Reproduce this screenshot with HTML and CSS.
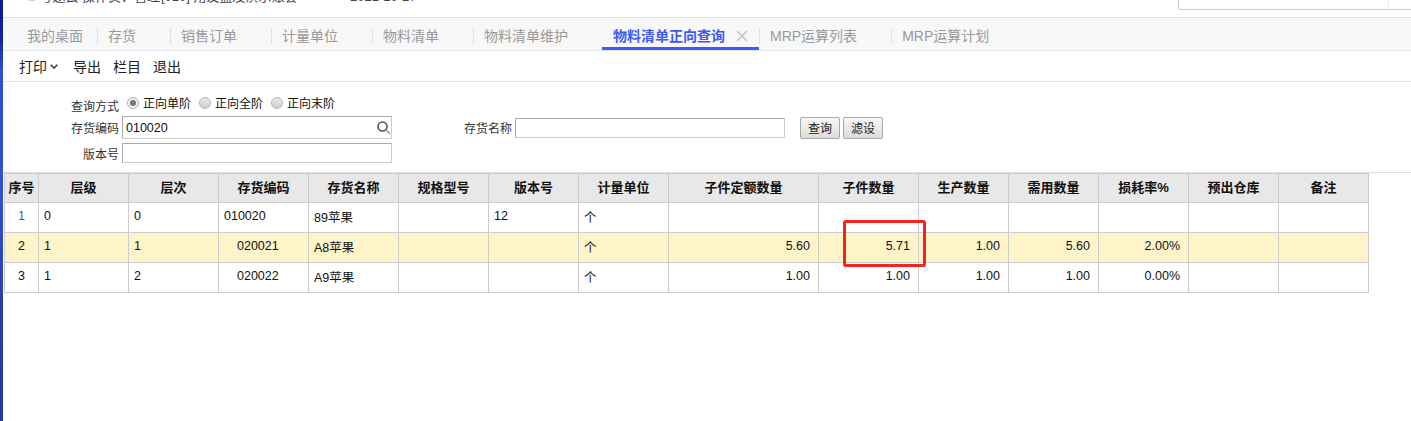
FILE: index.html
```html
<!DOCTYPE html>
<html lang="zh-CN">
<head>
<meta charset="utf-8">
<title>物料清单正向查询</title>
<link rel="stylesheet" href="styles.css">
</head>
<body>
<div class="app">
  <div class="strip"></div>
  <main class="main">
    <header class="top">
      <div class="top-info">
        <span class="top-user">■ 考题云 操作员：管理员</span>
        <span class="top-acct">[010] 用友蓝凌演示账套</span>
        <span class="top-date">2021-10-27</span>
      </div>
      <div class="top-search"><span class="top-search-btn"></span></div>
    </header>
    <nav class="tabs">
      <a class="tab tab-first">我的桌面</a>
      <a class="tab">存货</a>
      <a class="tab">销售订单</a>
      <a class="tab">计量单位</a>
      <a class="tab">物料清单</a>
      <a class="tab">物料清单维护</a>
      <a class="tab tab-active">物料清单正向查询
        <svg class="tab-close" width="12" height="12" viewBox="0 0 12 12"><path d="M1 1l10 10M11 1L1 11" stroke="#c4c4c4" stroke-width="1.6" fill="none"/></svg>
      </a>
      <a class="tab">MRP运算列表</a>
      <a class="tab tab-last">MRP运算计划</a>
    </nav>
    <div class="toolbar">
      <span class="tool tool-print">打印<svg class="chev" width="8" height="5" viewBox="0 0 8 5"><path d="M.7.7L4 4l3.3-3.3" stroke="#333" stroke-width="1.5" fill="none"/></svg></span>
      <span class="tool">导出</span>
      <span class="tool">栏目</span>
      <span class="tool">退出</span>
    </div>
    <form class="form">
      <div class="row row-mode">
        <span class="label label-mode">查询方式</span>
        <span class="radios">
          <span class="radio radio-on"></span><span class="radio-text">正向单阶</span>
          <span class="radio"></span><span class="radio-text">正向全阶</span>
          <span class="radio"></span><span class="radio-text">正向末阶</span>
        </span>
      </div>
      <div class="row row-code">
        <span class="label">存货编码</span>
        <span class="field field-code">010020
          <svg class="search" width="16" height="16" viewBox="0 0 16 16"><circle cx="6.5" cy="6.5" r="4.5" stroke="#555" stroke-width="1.6" fill="none"/><path d="M10 10l4 4" stroke="#8aa" stroke-width="1.6"/></svg>
        </span>
        <span class="label label-name">存货名称</span>
        <span class="field field-name"></span>
        <button type="button" class="btn">查询</button>
        <button type="button" class="btn">滤设</button>
      </div>
      <div class="row row-ver">
        <span class="label">版本号</span>
        <span class="field field-ver"></span>
      </div>
    </form>
    <section class="grid-wrap">
      <table class="grid">
        <colgroup>
          <col class="c-seq"><col class="c-90"><col class="c-90"><col class="c-90"><col class="c-90"><col class="c-90"><col class="c-90"><col class="c-90"><col class="c-150"><col class="c-100"><col class="c-90"><col class="c-90"><col class="c-90"><col class="c-90"><col class="c-90">
        </colgroup>
        <thead>
          <tr><th>序号</th><th>层级</th><th>层次</th><th>存货编码</th><th>存货名称</th><th>规格型号</th><th>版本号</th><th>计量单位</th><th>子件定额数量</th><th>子件数量</th><th>生产数量</th><th>需用数量</th><th>损耗率%</th><th>预出仓库</th><th>备注</th></tr>
        </thead>
        <tbody>
          <tr>
            <td class="seq seq-link">1</td><td>0</td><td>0</td><td>010020</td><td>89苹果</td><td></td><td>12</td><td>个</td><td></td><td></td><td></td><td></td><td></td><td></td><td></td>
          </tr>
          <tr class="hl">
            <td class="seq">2</td><td>1</td><td>1</td><td class="child">020021</td><td>A8苹果</td><td></td><td></td><td>个</td><td class="num">5.60</td><td class="num">5.71</td><td class="num">1.00</td><td class="num">5.60</td><td class="num">2.00%</td><td></td><td></td>
          </tr>
          <tr>
            <td class="seq">3</td><td>1</td><td>2</td><td class="child">020022</td><td>A9苹果</td><td></td><td></td><td>个</td><td class="num">1.00</td><td class="num">1.00</td><td class="num">1.00</td><td class="num">1.00</td><td class="num">0.00%</td><td></td><td></td>
          </tr>
        </tbody>
      </table>
      <div class="redbox"></div>
    </section>
  </main>
</div>
</body>
</html>
```
FILE: styles.css
```css
* { box-sizing: border-box; }
html, body { margin: 0; padding: 0; height: 100%; background: #fff; overflow: hidden; }
body { font-family: "Liberation Sans", "Noto Sans CJK SC", Arial, sans-serif; color: #222; font-size: 12px; }
.app { display: flex; height: 421px; }
.strip { width: 3px; flex: none; background: linear-gradient(180deg, #0b1c8c 0, #12279c 40px, #2f4fcf 70px, #3252cc 190px, #2a3fa8 300px, #26389c 421px); }
.main { flex: 1; min-width: 0; display: flex; flex-direction: column; }

.top { height: 18px; flex: none; display: flex; justify-content: space-between; align-items: flex-start; border-bottom: 1px solid #e2e2e2; overflow: hidden; }
.top-info { display: flex; font-size: 13px; line-height: 14px; margin-top: -10px; color: #444; padding-left: 25px; }
.top-user { width: 133px; white-space: nowrap; overflow: hidden; }
.top-acct { width: 189px; }
.top-search { width: 233px; height: 10px; border: 1px solid #ccc; border-top: 0; border-right: 0; border-bottom-left-radius: 3px; display: flex; justify-content: flex-end; }
.top-search-btn { width: 23px; border-left: 1px solid #eee; }

.tabs { height: 33px; flex: none; display: flex; align-items: center; background: #f8f8f8; border-bottom: 1px solid #e6e6f0; font-size: 14px; color: #999; padding: 4px 0 0 10px; }
.tab { height: 16px; line-height: 16px; padding: 0 34px 0 10px; border-left: 1px solid #e0e0e0; white-space: nowrap; display: flex; align-items: center; }
.tab-first { padding: 0 14px; border-left: 0; }
.tab-last { padding-right: 0; }
.tab-active { height: 28px; padding: 3px 11px 0; color: #3d5af1; font-weight: 700; border-left: 0; border-bottom: 3px solid #3d5af1; }
.tab-close { margin-left: 11px; }

.toolbar { height: 31px; flex: none; display: flex; align-items: center; gap: 12px; padding-left: 16px; border-bottom: 1px solid #e4e4e4; font-size: 14px; color: #222; }
.tool-print { margin-right: 3px; display: flex; align-items: center; }
.chev { margin-left: 3px; }

.form { height: 91px; flex: none; border-bottom: 1px solid #ddd; display: flex; flex-direction: column; padding-top: 9px; }
.row { display: flex; align-items: center; }
.row-mode { height: 23px; }
.row-code { height: 23px; margin-top: 2px; }
.row-ver { height: 20px; margin-top: 4px; }
.label { width: 116px; text-align: right; font-size: 12px; color: #333; margin-right: 3px; flex: none; }
.label-mode { position: relative; top: 3px; margin-right: 8px; }
.radios { display: flex; align-items: center; font-size: 12px; color: #111; }
.radio { width: 12px; height: 12px; border-radius: 50%; border: 1px solid #b5b5b5; background: linear-gradient(180deg, #e8e8e8, #d0d0d0); margin-right: 4px; display: flex; align-items: center; justify-content: center; }
.radio-on { background: #f0f0f0; }
.radio-on::after { content: ""; width: 6px; height: 6px; border-radius: 50%; background: #777; }
.radio-text { margin-right: 8px; }

.field { display: flex; align-items: center; justify-content: space-between; height: 20px; border: 1px solid #ccc; border-top-color: #aaa; border-left-color: #aaa; background: #fff; font-size: 12.5px; padding: 0 0 0 3px; color: #111; }
.field-code { width: 270px; height: 23px; }
.field-ver { width: 270px; }
.field-name { width: 270px; margin-right: 15px; }
.label-name { width: 120px; margin-right: 3px; }
.search { margin-right: -1px; }
.btn { width: 40px; height: 22px; padding: 0; border: 1px solid #a8a8a8; border-radius: 2px; background: linear-gradient(180deg, #f8f8f8, #dcdcdc); font: 12px "Liberation Sans", "Noto Sans CJK SC", sans-serif; color: #222; margin-right: 3px; }

.grid-wrap { position: relative; padding-left: 1px; }
.grid { border-collapse: collapse; table-layout: fixed; width: 1365px; font-size: 12.5px; color: #111; }
.c-seq { width: 34px; }
.c-90 { width: 90px; }
.c-100 { width: 100px; }
.c-150 { width: 150px; }
.grid th, .grid td { border: 1px solid #ccc; height: 30px; padding: 0 5px; overflow: hidden; white-space: nowrap; }
.grid th { background: #e8e8e8; font-weight: 700; font-size: 13px; color: #111; text-align: center; padding: 0 0 3px; height: 29px; }
.grid td { text-align: left; padding-bottom: 3px; }
.grid td.seq { text-align: center; padding-left: 0; padding-right: 0; }
.seq-link { color: #0a6ebd; }
.grid td.child { padding-left: 18px; }
.grid td.num { text-align: right; padding-right: 8px; }
.hl td { background: #fff4c9; }
.redbox { position: absolute; left: 840px; top: 47px; width: 83px; height: 47px; border: 3px solid #f5241c; border-radius: 3px; pointer-events: none; }
```
